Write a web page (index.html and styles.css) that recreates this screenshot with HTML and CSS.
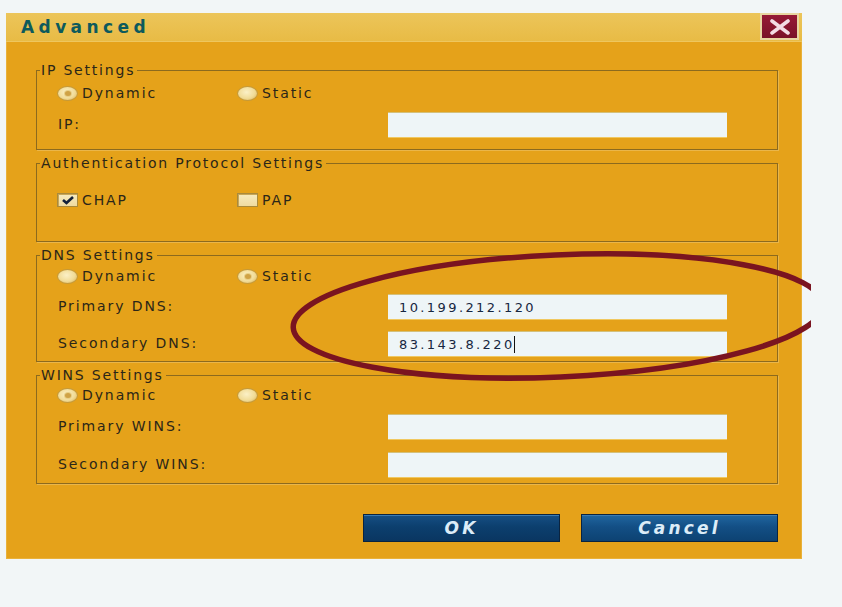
FILE: index.html
```
<!DOCTYPE html>
<html lang="en">
<head>
<meta charset="utf-8">
<title>Advanced</title>
<link rel="stylesheet" href="styles.css">
</head>
<body>
<div class="dialog">
  <div class="titlebar">
    <span class="title">Advanced</span>
    <button class="close" aria-label="Close">
      <svg width="22" height="16" viewBox="0 0 22 16"><path d="M3 2 L19 14 M19 2 L3 14" stroke="#f3dde4" stroke-width="3.6" stroke-linecap="round"/></svg>
    </button>
  </div>
  <div class="body">
    <fieldset class="group g-ip">
      <legend>IP Settings</legend>
      <div class="inner">
        <div class="opts">
          <span class="opt"><span class="radio on"></span>Dynamic</span>
          <span class="opt"><span class="radio"></span>Static</span>
        </div>
        <div class="field"><span class="lbl">IP:</span><span class="input"></span></div>
      </div>
    </fieldset>
    <fieldset class="group g-auth">
      <legend>Authentication Protocol Settings</legend>
      <div class="inner">
        <div class="opts">
          <span class="opt"><span class="check on"><svg width="14" height="10" viewBox="0 0 14 10"><path d="M2 5 L5.5 8 L12 2" fill="none" stroke="#13213a" stroke-width="2.6"/></svg></span>CHAP</span>
          <span class="opt"><span class="check"></span>PAP</span>
        </div>
      </div>
    </fieldset>
    <fieldset class="group g-dns">
      <legend>DNS Settings</legend>
      <div class="inner">
        <div class="opts">
          <span class="opt"><span class="radio"></span>Dynamic</span>
          <span class="opt"><span class="radio on"></span>Static</span>
        </div>
        <div class="field"><span class="lbl">Primary DNS:</span><span class="input">10.199.212.120</span></div>
        <div class="field"><span class="lbl">Secondary DNS:</span><span class="input">83.143.8.220<span class="caret"></span></span></div>
      </div>
    </fieldset>
    <fieldset class="group g-wins">
      <legend>WINS Settings</legend>
      <div class="inner">
        <div class="opts">
          <span class="opt"><span class="radio on"></span>Dynamic</span>
          <span class="opt"><span class="radio"></span>Static</span>
        </div>
        <div class="field"><span class="lbl">Primary WINS:</span><span class="input"></span></div>
        <div class="field"><span class="lbl">Secondary WINS:</span><span class="input"></span></div>
      </div>
    </fieldset>
    <div class="actions">
      <button class="btn btn-ok">OK</button>
      <button class="btn">Cancel</button>
    </div>
  </div>
</div>
<svg class="ring" width="811" height="607" viewBox="0 0 811 607">
  <ellipse cx="558" cy="316" rx="265" ry="61" fill="none" stroke="#7a1420" stroke-width="5.5" transform="rotate(-2.5 558 316)"/>
</svg>
</body>
</html>
```

FILE: styles.css
```
html, body {
  margin: 0;
  padding: 0;
}
body {
  background: #f2f6f7;
  font-family: "DejaVu Sans", Verdana, sans-serif;
  width: 842px;
  height: 607px;
  overflow: hidden;
  position: relative;
}
.dialog {
  margin: 13px 0 0 6px;
  width: 796px;
  background: #e5a21a;
  box-shadow: inset 0 0 0 1px #e9b13a;
}
.titlebar {
  height: 28px;
  display: flex;
  justify-content: space-between;
  align-items: flex-start;
  background: linear-gradient(#ecc55a, #e8bb45);
  border-bottom: 1px solid #eec65e;
}
.title {
  margin: 5px 0 0 15px;
  font-weight: bold;
  font-size: 17px;
  letter-spacing: 4.4px;
  color: #0d5a5c;
  line-height: 18px;
}
.close {
  margin: 0 3px 0 0;
  width: 39px;
  height: 27px;
  padding: 0;
  border: 2px solid #e8d6a0;
  background: linear-gradient(#961a36, #7a1228);
  display: flex;
  align-items: center;
  justify-content: center;
}
.body {
  padding: 20px 24px 17px 30px;
  display: flex;
  flex-direction: column;
}
.group {
  margin: 0;
  padding: 0;
  border: 1px solid #8c6a1e;
  box-shadow: 1px 1px 0 #eab64a;
  min-width: 0;
}
.group + .group {
  margin-top: 5px;
}
legend {
  margin-left: 3px;
  padding: 0 2px 0 1px;
  font-size: 14px;
  line-height: 16px;
  letter-spacing: 1.8px;
  color: #2b2618;
}
.inner {
  padding: 0 0 0 21px;
  display: flex;
  flex-direction: column;
  font-size: 14px;
  letter-spacing: 1.9px;
  color: #2b2618;
}
.opts {
  display: grid;
  grid-template-columns: 180px auto;
  height: 20px;
  align-items: center;
}
.opt {
  display: flex;
  align-items: center;
  gap: 4px;
  margin-left: -1px;
}
.radio {
  width: 19px;
  height: 13px;
  border-radius: 50%;
  border: 1px solid #c59a3a;
  background: radial-gradient(ellipse at 45% 40%, #fbf0c6 0%, #f1dc98 55%, #d6ad50 100%);
  display: flex;
  align-items: center;
  justify-content: center;
}
.radio.on::after {
  content: "";
  width: 6px;
  height: 5px;
  border-radius: 50%;
  background: #cfa245;
  box-shadow: 0 0 0 1px #e8cf86;
}
.check {
  width: 21px;
  height: 14px;
  box-sizing: border-box;
  border: 1px solid #a98a3c;
  background: linear-gradient(#f7ebc0, #efdba0);
  box-shadow: inset 1px 1px 0 #c7a75a;
  display: flex;
  align-items: center;
  justify-content: center;
}
.field {
  display: grid;
  grid-template-columns: 330px 339px;
  align-items: center;
}
.lbl {
  line-height: 16px;
  position: relative;
  top: -1px;
}
.input {
  height: 26px;
  box-sizing: border-box;
  background: #eef5f7;
  border-top: 1px solid #d4c07a;
  border-bottom: 1px solid #f0c860;
  padding-left: 11px;
  display: flex;
  align-items: center;
  font-size: 13px;
  letter-spacing: 2.4px;
  color: #162640;
}
.caret {
  display: inline-block;
  width: 1px;
  height: 17px;
  background: #111;
  margin-left: -1px;
}

.g-ip .opts { margin-top: 5px; }
.g-ip .field { margin-top: 9px; }
.g-ip .inner { padding-bottom: 11px; }

.g-auth .opts { margin-top: 19px; }
.g-auth .inner { padding-bottom: 31px; }

.g-dns .opts { margin-top: 3px; }
.g-dns .field { margin-top: 8px; }
.g-dns .field + .field { margin-top: 11px; }
.g-dns .inner { padding-bottom: 4px; }

.g-wins .opts { margin-top: 2px; }
.g-wins .field { margin-top: 9px; }
.g-wins .field + .field { margin-top: 12px; }
.g-wins .inner { padding-bottom: 5px; }

.actions {
  margin-top: 30px;
  display: flex;
  justify-content: flex-end;
  gap: 21px;
}
.btn {
  width: 197px;
  height: 28px;
  padding: 0;
  border: 1px solid #0a2440;
  background: linear-gradient(#2066a0, #134f85 45%, #0d4272);
  color: #dcecf8;
  font-family: "DejaVu Sans", Verdana, sans-serif;
  font-weight: bold;
  font-style: italic;
  font-size: 17px;
  letter-spacing: 3.2px;
  box-shadow: inset 0 1px 0 #3a7bb3;
}
.btn-ok {
  background: linear-gradient(#164f84, #0c3f6e 45%, #0a3661);
}
.ring {
  position: absolute;
  left: 0;
  top: 0;
  pointer-events: none;
}
```
